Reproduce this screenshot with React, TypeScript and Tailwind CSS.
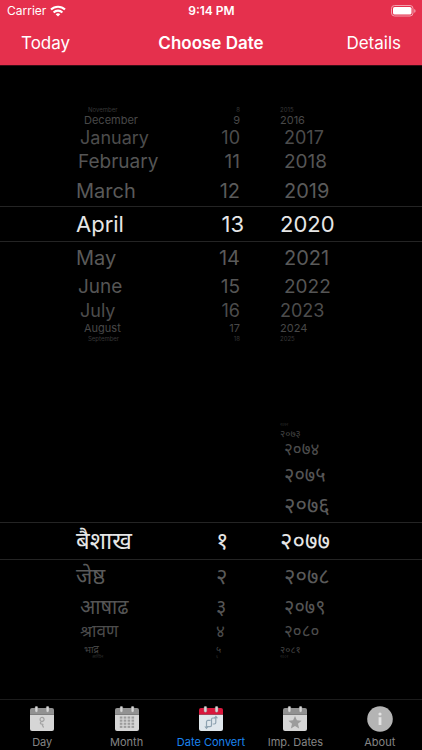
import { useState, type ReactNode } from "react";

type Tier = { row: string; month: string; day: string; year: string };

const gregorianTiers: Tier[] = [
  { row: "h-[7px] text-[6px] text-[#383838]", month: "pl-3", day: "pr-1", year: "pl-0" },
  { row: "h-3.5 text-[11px] text-[#484848]", month: "pl-2", day: "pr-1", year: "pl-0" },
  { row: "h-[21px] text-[18px] text-[#4c4c4c]", month: "pl-1", day: "pr-1", year: "pl-1" },
  { row: "h-[27px] text-[19px] text-[#555555]", month: "pl-0.5", day: "pr-1", year: "pl-1" },
  { row: "h-[31px] text-[20px] text-[#5a5a5a]", month: "pl-0", day: "pr-1", year: "pl-1" },
  { row: "h-9 text-[22px] text-[#e6e6e6] border-y border-[#242424]", month: "pl-0", day: "pr-0", year: "pl-0" },
  { row: "h-[31px] text-[20px] text-[#5a5a5a]", month: "pl-0", day: "pr-1", year: "pl-1" },
  { row: "h-[27px] text-[19px] text-[#555555]", month: "pl-0.5", day: "pr-1", year: "pl-1" },
  { row: "h-[21px] text-[18px] text-[#4c4c4c]", month: "pl-1", day: "pr-1", year: "pl-0" },
  { row: "h-3.5 text-[11px] text-[#484848]", month: "pl-2", day: "pr-1", year: "pl-0" },
  { row: "h-[7px] text-[6px] text-[#383838]", month: "pl-3", day: "pr-1", year: "pl-0" },
];

const nepaliTiers: Tier[] = [
  { row: "h-1 text-[4px] text-[#2c2c2c]", month: "pl-4", day: "pl-4", year: "pl-0" },
  { row: "h-3 text-[10px] text-[#444444]", month: "pl-2", day: "pl-4", year: "pl-0" },
  { row: "h-[22px] text-[17px] text-[#4c4c4c]", month: "pl-1", day: "pl-4", year: "pl-1" },
  { row: "h-7 text-[20px] text-[#555555]", month: "pl-1", day: "pl-4", year: "pl-1" },
  { row: "h-[33px] text-[22px] text-[#5a5a5a]", month: "pl-0", day: "pl-4", year: "pl-1" },
  { row: "h-[38px] text-[24px] text-[#e6e6e6] border-y border-[#242424]", month: "pl-0", day: "pl-4", year: "pl-0" },
  { row: "h-[33px] text-[22px] text-[#5a5a5a]", month: "pl-0", day: "pl-4", year: "pl-1" },
  { row: "h-7 text-[20px] text-[#555555]", month: "pl-1", day: "pl-4", year: "pl-1" },
  { row: "h-[22px] text-[17px] text-[#4c4c4c]", month: "pl-1", day: "pl-4", year: "pl-1" },
  { row: "h-3 text-[10px] text-[#444444]", month: "pl-2", day: "pl-4", year: "pl-0" },
  { row: "h-1 text-[4px] text-[#2c2c2c]", month: "pl-4", day: "pl-4", year: "pl-0" },
];

const gregorianRows = [
  ["November", "8", "2015"],
  ["December", "9", "2016"],
  ["January", "10", "2017"],
  ["February", "11", "2018"],
  ["March", "12", "2019"],
  ["April", "13", "2020"],
  ["May", "14", "2021"],
  ["June", "15", "2022"],
  ["July", "16", "2023"],
  ["August", "17", "2024"],
  ["September", "18", "2025"],
];

const nepaliRows = [
  ["", "", "२०७२"],
  ["", "", "२०७३"],
  ["", "", "२०७४"],
  ["", "", "२०७५"],
  ["", "", "२०७६"],
  ["बैशाख", "१", "२०७७"],
  ["जेष्ठ", "२", "२०७८"],
  ["आषाढ", "३", "२०७९"],
  ["श्रावण", "४", "२०८०"],
  ["भाद्र", "५", "२०८१"],
  ["आश्विन", "६", "२०८२"],
];

function Picker({
  label,
  rows,
  tiers,
  dayAlign,
}: {
  label: string;
  rows: string[][];
  tiers: Tier[];
  dayAlign: string;
}) {
  return (
    <section aria-label={label} className="flex flex-col">
      {rows.map(([month, day, year], i) => {
        const tier = tiers[i];
        return (
          <div
            key={year}
            className={`grid grid-cols-[76fr_124fr_44fr_36fr_142fr] content-center items-center leading-none ${tier.row}`}
          >
            {month ? (
              <button type="button" className={`col-start-2 whitespace-nowrap text-left ${tier.month}`}>
                {month}
              </button>
            ) : null}
            {day ? (
              <button type="button" className={`col-start-3 ${dayAlign} ${tier.day}`}>
                {day}
              </button>
            ) : null}
            <button type="button" className={`col-start-5 text-left ${tier.year}`}>
              {year}
            </button>
          </div>
        );
      })}
    </section>
  );
}

function CalendarIcon({ active = false, children }: { active?: boolean; children?: ReactNode }) {
  return (
    <svg viewBox="0 0 26 26" className="size-[26px]" aria-hidden="true">
      <path d="M1 8.5h24V23a2 2 0 0 1-2 2H3a2 2 0 0 1-2-2z" fill={active ? "#dfe7ec" : "#d6d6d6"} />
      <path d="M3 2h20a2 2 0 0 1 2 2v4.5H1V4a2 2 0 0 1 2-2z" fill={active ? "#d9173c" : "#929292"} />
      <rect x="6" y="0.3" width="2.8" height="6" rx="1.4" fill="#d6d6d6" stroke="#8a8a8a" strokeWidth=".4" />
      <rect x="17.2" y="0.3" width="2.8" height="6" rx="1.4" fill="#d6d6d6" stroke="#8a8a8a" strokeWidth=".4" />
      {children}
    </svg>
  );
}

const monthDots = [10.5, 13.6, 16.7, 19.8].flatMap((y) => [5.8, 9.7, 13.6, 17.5].map((x) => ({ x, y })));

const tabs: { name: string; icon: ReactNode }[] = [
  {
    name: "Day",
    icon: (
      <CalendarIcon>
        <path
          d="M13 15.4a2 2 0 1 1 1.6-.7c-.5.7-1.4.8-2.2 1.1-1.6.6-1.3 2.2.2 2.3l1.4.2-.6 1 1 1.8"
          fill="none"
          stroke="#a3a3a3"
          strokeWidth="1.2"
          strokeLinecap="round"
          strokeLinejoin="round"
        />
      </CalendarIcon>
    ),
  },
  {
    name: "Month",
    icon: (
      <CalendarIcon>
        {monthDots.map(({ x, y }) => (
          <rect key={`${x}-${y}`} x={x} y={y} width="2.6" height="2.1" fill="#9c9c9c" />
        ))}
      </CalendarIcon>
    ),
  },
  {
    name: "Date Convert",
    icon: (
      <CalendarIcon active>
        <path
          d="M8.5 21.5v-5.7a1.4 1.4 0 0 1 1.4-1.4h2.6M8.5 20.6h3.6a1.4 1.4 0 0 0 1.4-1.4v-5.8a1.4 1.4 0 0 1 1.4-1.4h3M14.8 18h1.6a1.4 1.4 0 0 0 1.4-1.4V11"
          fill="none"
          stroke="#8ea3b1"
          strokeWidth="1.2"
        />
        <path d="M6.3 20.4h4.4l-2.2 2.8zM15.7 12.2h4.4l-2.2-2.8z" fill="#8ea3b1" />
      </CalendarIcon>
    ),
  },
  {
    name: "Imp. Dates",
    icon: (
      <CalendarIcon>
        <path
          d="M13 10l1.9 4.3 4.7.4-3.6 3.1 1.1 4.6-4.1-2.4-4.1 2.4L10 17.8l-3.6-3.1 4.7-.4z"
          fill="#9c9c9c"
        />
      </CalendarIcon>
    ),
  },
  {
    name: "About",
    icon: (
      <svg viewBox="0 0 26 26" className="size-[26px]" aria-hidden="true">
        <circle cx="13" cy="13" r="12.8" fill="#b4b4b4" />
        <circle cx="13" cy="8" r="1.6" fill="#e4e4e4" />
        <path d="M11.6 11.2h2.8v7.8h-2.8z" fill="#e4e4e4" />
      </svg>
    ),
  },
];

export default function App() {
  const [current, setCurrent] = useState("Date Convert");

  return (
    <div className="flex min-h-screen flex-col bg-black font-['Inter','Noto_Sans','Noto_Sans_Devanagari',sans-serif]">
      <header className="border-b border-[#3a0c15] bg-[#e5304d] text-white">
        <div className="grid h-[22px] grid-cols-3 items-center pl-[7px] pr-1.5 text-[12px]">
          <div className="flex items-center gap-1">
            <span>Carrier</span>
            <svg viewBox="0 0 16 12" className="h-3 w-4" fill="none" stroke="#fff" strokeWidth="2.1" aria-hidden="true">
              <path d="M1 4.6a10 10 0 0 1 14 0M3.6 7.5a6.2 6.2 0 0 1 8.8 0" />
              <path d="M8 11.6L5.7 9.3a3.3 3.3 0 0 1 4.6 0z" fill="#fff" stroke="none" />
            </svg>
          </div>
          <span className="text-center font-semibold">9:14 PM</span>
          <svg viewBox="0 0 25 12" className="h-3 w-[25px] justify-self-end" aria-hidden="true">
            <rect x=".5" y=".5" width="21.5" height="10.5" rx="3" fill="none" stroke="#f2a0ae" />
            <rect x="2" y="2" width="18.5" height="7.5" rx="1.6" fill="#fff" />
            <path d="M23.2 4v3.8a2 2 0 0 0 0-3.8z" fill="#f2a0ae" />
          </svg>
        </div>
        <nav className="grid h-[43px] grid-cols-3 items-center px-[21px] text-[17px]">
          <button type="button" className="text-left">Today</button>
          <h1 className="whitespace-nowrap text-center font-semibold">Choose Date</h1>
          <button type="button" className="text-right">Details</button>
        </nav>
      </header>

      <main className="flex flex-1 flex-col justify-around">
        <Picker label="Gregorian date" rows={gregorianRows} tiers={gregorianTiers} dayAlign="text-right" />
        <Picker label="Nepali date" rows={nepaliRows} tiers={nepaliTiers} dayAlign="text-left" />
      </main>

      <nav className="grid h-[51px] grid-cols-5 border-t border-[#1c1c1c]">
        {tabs.map((tab) => (
          <button
            key={tab.name}
            type="button"
            onClick={() => setCurrent(tab.name)}
            className={`flex flex-col items-center gap-0.5 whitespace-nowrap pt-1.5 text-[11px] leading-4 ${
              tab.name === current ? "text-[#1a84f0]" : "text-[#858585]"
            }`}
          >
            {tab.icon}
            <span>{tab.name}</span>
          </button>
        ))}
      </nav>
    </div>
  );
}
